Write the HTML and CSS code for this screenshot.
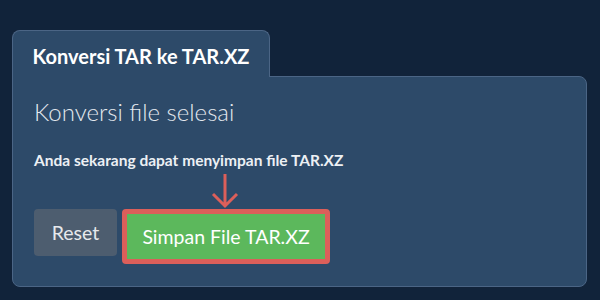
FILE: index.html
```html
<!DOCTYPE html>
<html lang="id">
<head>
    <meta charset="UTF-8">
    <title>Konversi TAR ke TAR.XZ</title>
    <link rel="stylesheet" href="styles.css">
</head>
<body>
    <div class="converter">
        <div class="tab">Konversi TAR ke TAR.XZ</div>
        <div class="panel">
            <h2>Konversi file selesai</h2>
            <p class="info">Anda sekarang dapat menyimpan file TAR.XZ</p>
            <div class="arrow">
                <svg width="28" height="36" viewBox="0 0 28 36">
                    <path d="M14 1 V33 M2 21 L14 33 L26 21" fill="none" stroke="#dc5f5a" stroke-width="3"/>
                </svg>
            </div>
            <div class="actions">
                <button class="btn btn-reset">Reset</button>
                <button class="btn btn-save">Simpan File TAR.XZ</button>
            </div>
        </div>
    </div>
</body>
</html>
```

FILE: styles.css
```css
body {
    margin: 0;
    padding: 30px 12px 13px 12px;
    background-color: #11233a;
    font-family: Lato, 'Open Sans', sans-serif;
}

.converter {
    width: 575px;
    display: flex;
    flex-direction: column;
}

.tab {
    width: 258px;
    height: 47px;
    box-sizing: border-box;
    padding-top: 13px;
    text-align: center;
    font-size: 20px;
    font-weight: bold;
    color: #ffffff;
    background-color: #2d4a69;
    border: 1px solid #4b6585;
    border-bottom: none;
    border-radius: 8px 8px 0 0;
    position: relative;
    margin-bottom: -1px;
    z-index: 1;
}

.panel {
    background-color: #2d4a69;
    border: 1px solid #4b6585;
    border-radius: 0 8px 8px 8px;
    padding: 20px 21px 20px 21px;
    height: 169px;
}

h2 {
    margin: 0;
    font-size: 24px;
    font-weight: 300;
    color: #e3e8ee;
}

.info {
    margin: 25px 0 0 0;
    font-size: 15.5px;
    font-weight: bold;
    color: #ecf0f4;
}

.arrow {
    margin: 4px 0 0 177px;
    height: 36px;
}

.arrow svg {
    display: block;
}

.actions {
    display: flex;
    align-items: flex-start;
    gap: 5px;
}

.btn {
    font-family: Lato, 'Open Sans', sans-serif;
    font-size: 19.5px;
    border-radius: 4px;
    cursor: pointer;
}

.btn-reset {
    width: 83px;
    height: 47px;
    border: none;
    background-color: #4d5d6f;
    color: #e6e9ec;
}

.btn-save {
    width: 208px;
    height: 55px;
    border: 5px solid #dc5f5a;
    background-color: #5cb85c;
    color: #ffffff;
}
```
